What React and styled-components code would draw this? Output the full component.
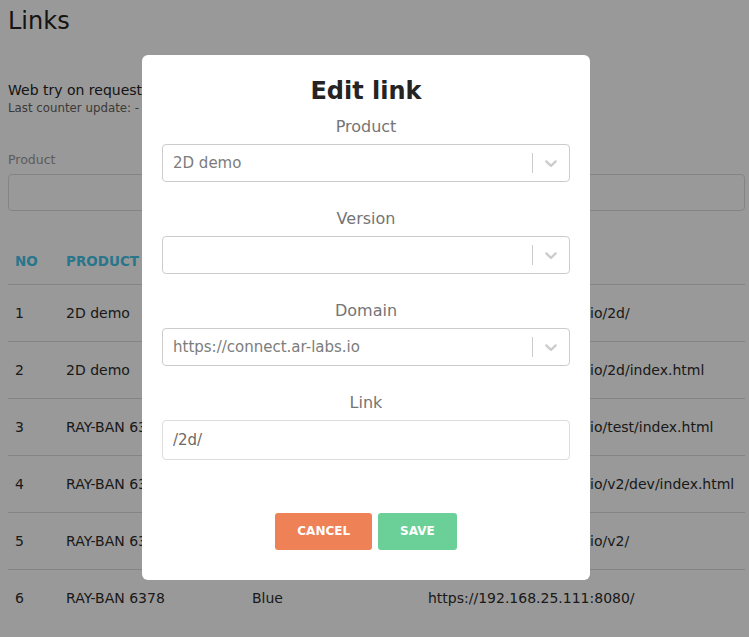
import React from 'react';
import styled, { createGlobalStyle } from 'styled-components';

const GlobalStyle = createGlobalStyle`
  * {
    box-sizing: border-box;
  }
  body {
    margin: 0;
    background: #ffffff;
    font-family: 'DejaVu Sans', 'Liberation Sans', sans-serif;
    color: #2c2c2c;
  }
`;

const links = [
  { no: 1, product: '2D demo', version: 'Default', link: 'https://connect.ar-labs.io/2d/' },
  { no: 2, product: '2D demo', version: 'Default', link: 'https://connect.ar-labs.io/2d/index.html' },
  { no: 3, product: 'RAY-BAN 6378', version: 'Black', link: 'https://connect.ar-labs.io/test/index.html' },
  { no: 4, product: 'RAY-BAN 6378', version: 'Black', link: 'https://connect.ar-labs.io/v2/dev/index.html' },
  { no: 5, product: 'RAY-BAN 6378', version: 'Gold', link: 'https://connect.ar-labs.io/v2/' },
  { no: 6, product: 'RAY-BAN 6378', version: 'Blue', link: 'https://192.168.25.111:8080/' },
];

const Chevron = () => (
  <svg width="20" height="20" viewBox="0 0 20 20" aria-hidden="true">
    <path
      fill="#cccccc"
      d="M4.516 7.548c0.436-0.446 1.043-0.481 1.576 0l3.908 3.747 3.908-3.747c0.533-0.481 1.141-0.446 1.574 0 0.436 0.445 0.408 1.197 0 1.615-0.406 0.418-4.695 4.502-4.695 4.502-0.217 0.223-0.502 0.335-0.787 0.335s-0.57-0.112-0.789-0.335c0 0-4.287-4.084-4.695-4.502s-0.436-1.17 0-1.615z"
    />
  </svg>
);

const SelectBox = ({ value }) => (
  <StyledControl>
    <StyledValue>{value}</StyledValue>
    <StyledSeparator />
    <StyledIndicator>
      <Chevron />
    </StyledIndicator>
  </StyledControl>
);

const App = () => {
  return (
    <>
      <GlobalStyle />
      <StyledPage>
        <StyledPageTitle>Links</StyledPageTitle>

        <StyledCounter>
          <StyledCounterTitle>Web try on request</StyledCounterTitle>
          <StyledCounterNote>Last counter update: -</StyledCounterNote>
        </StyledCounter>

        <StyledFilter>
          <StyledFilterLabel>Product</StyledFilterLabel>
          <StyledFilterInput />
        </StyledFilter>

        <StyledTable>
          <StyledHeadRow>
            <StyledHeadCell>No</StyledHeadCell>
            <StyledHeadCell>Product</StyledHeadCell>
            <StyledHeadCell>Version</StyledHeadCell>
            <StyledHeadCell>Link</StyledHeadCell>
          </StyledHeadRow>
          {links.map(row => (
            <StyledRow key={row.no}>
              <StyledCell>{row.no}</StyledCell>
              <StyledCell>{row.product}</StyledCell>
              <StyledCell>{row.version}</StyledCell>
              <StyledCell>{row.link}</StyledCell>
            </StyledRow>
          ))}
        </StyledTable>
      </StyledPage>

      <StyledOverlay>
        <StyledModal>
          <StyledModalTitle>Edit link</StyledModalTitle>
          <StyledFields>
            <StyledField>
              <StyledFieldLabel>Product</StyledFieldLabel>
              <SelectBox value="2D demo" />
            </StyledField>
            <StyledField>
              <StyledFieldLabel>Version</StyledFieldLabel>
              <SelectBox value="" />
            </StyledField>
            <StyledField>
              <StyledFieldLabel>Domain</StyledFieldLabel>
              <SelectBox value="https://connect.ar-labs.io" />
            </StyledField>
            <StyledField>
              <StyledFieldLabel>Link</StyledFieldLabel>
              <StyledTextInput defaultValue="/2d/" />
            </StyledField>
          </StyledFields>
          <StyledActions>
            <StyledButton $color="#ef8157">Cancel</StyledButton>
            <StyledButton $color="#6bd098">Save</StyledButton>
          </StyledActions>
        </StyledModal>
      </StyledOverlay>
    </>
  );
};

export default App;

const StyledPage = styled.div`
  padding: 7px 4px 0 8px;
`;

const StyledPageTitle = styled.h1`
  margin: 0;
  font-size: 24px;
  line-height: 29px;
  font-weight: 400;
  color: #252422;
`;

const StyledCounter = styled.div`
  margin-top: 44px;
`;

const StyledCounterTitle = styled.div`
  font-size: 14px;
  line-height: 20px;
  color: #252422;
`;

const StyledCounterNote = styled.div`
  font-size: 11.8px;
  line-height: 16px;
  color: #66615b;
`;

const StyledFilter = styled.div`
  margin-top: 35px;
  display: flex;
  flex-direction: column;
  gap: 5px;
`;

const StyledFilterLabel = styled.label`
  font-size: 12.5px;
  line-height: 18px;
  color: #9a9a9a;
`;

const StyledFilterInput = styled.div`
  height: 37px;
  border: 1px solid #dddddd;
  border-radius: 4px;
  background: #ffffff;
`;

const StyledTable = styled.div`
  margin-top: 27px;
`;

const StyledHeadRow = styled.div`
  display: grid;
  grid-template-columns: 51px 186px 176px 1fr;
  height: 46px;
  align-items: center;
`;

const StyledHeadCell = styled.div`
  padding-left: 7px;
  font-size: 13.5px;
  font-weight: 700;
  text-transform: uppercase;
  color: #45c5ea;
`;

const StyledRow = styled.div`
  display: grid;
  grid-template-columns: 51px 186px 176px 1fr;
  height: 57px;
  align-items: center;
  border-top: 1px solid #dddddd;
`;

const StyledCell = styled.div`
  padding-left: 7px;
  font-size: 14px;
  color: #2c2c2c;
  white-space: nowrap;
`;

const StyledOverlay = styled.div`
  position: fixed;
  inset: 0;
  background: rgba(0, 0, 0, 0.4);
  display: flex;
  justify-content: center;
  align-items: flex-start;
  padding: 55px 17px 0 0;
`;

const StyledModal = styled.div`
  width: 448px;
  background: #ffffff;
  border-radius: 6px;
  padding: 22px 20px 30px;
  display: flex;
  flex-direction: column;
`;

const StyledModalTitle = styled.h2`
  margin: 0 0 10px;
  font-size: 24px;
  line-height: 29px;
  font-weight: 700;
  text-align: center;
  color: #252422;
`;

const StyledFields = styled.div`
  display: flex;
  flex-direction: column;
  gap: 26px;
`;

const StyledField = styled.div`
  display: flex;
  flex-direction: column;
  gap: 6px;
`;

const StyledFieldLabel = styled.label`
  font-size: 16px;
  line-height: 22px;
  text-align: center;
  color: #747474;
`;

const StyledControl = styled.div`
  display: flex;
  align-items: center;
  height: 38px;
  border: 1px solid #cccccc;
  border-radius: 4px;
  background: #ffffff;
`;

const StyledValue = styled.div`
  flex: 1;
  padding: 0 10px;
  font-size: 15px;
  color: #7c7c7c;
  white-space: nowrap;
  overflow: hidden;
`;

const StyledSeparator = styled.span`
  align-self: stretch;
  width: 1px;
  margin: 8px 0;
  background: #cccccc;
`;

const StyledIndicator = styled.div`
  display: flex;
  padding: 8px;
`;

const StyledTextInput = styled.input`
  height: 40px;
  padding: 0 10px;
  border: 1px solid #dddddd;
  border-radius: 4px;
  font-family: inherit;
  font-size: 15px;
  color: #6f6a64;
  outline: none;
`;

const StyledActions = styled.div`
  display: flex;
  justify-content: center;
  gap: 6px;
  margin-top: 53px;
`;

const StyledButton = styled.button`
  padding: 11px 22px;
  border: none;
  border-radius: 3px;
  background: ${props => props.$color};
  color: #ffffff;
  font-family: inherit;
  font-size: 12px;
  line-height: 15px;
  font-weight: 700;
  text-transform: uppercase;
  cursor: pointer;
`;
